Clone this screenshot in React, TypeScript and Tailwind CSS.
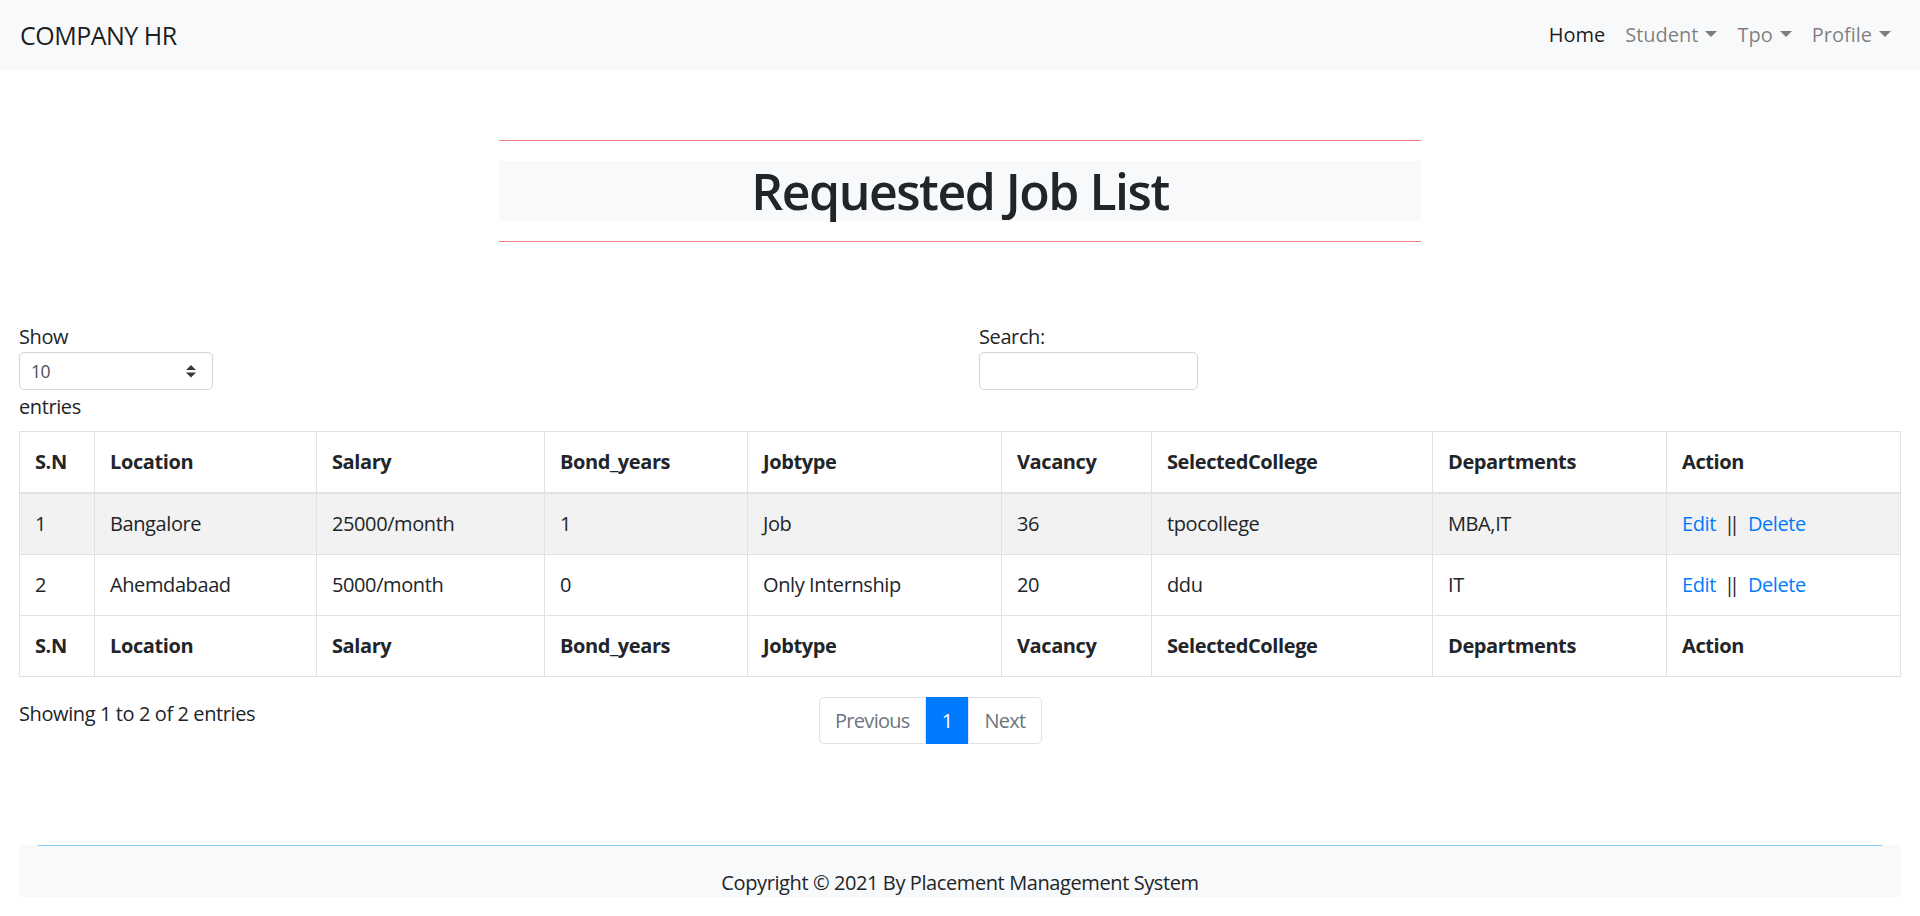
import React from "react";

const FONT = { fontFamily: '"Open Sans", "Noto Sans", Arial, sans-serif' };

const headers = [
  { label: "S.N", w: "w-[75px]" },
  { label: "Location", w: "w-[222px]" },
  { label: "Salary", w: "w-[228px]" },
  { label: "Bond_years", w: "w-[203px]" },
  { label: "Jobtype", w: "w-[254px]" },
  { label: "Vacancy", w: "w-[150px]" },
  { label: "SelectedCollege", w: "w-[281px]" },
  { label: "Departments", w: "w-[234px]" },
  { label: "Action", w: "w-[234px]" },
];

const rows = [
  ["1", "Bangalore", "25000/month", "1", "Job", "36", "tpocollege", "MBA,IT"],
  ["2", "Ahemdabaad", "5000/month", "0", "Only Internship", "20", "ddu", "IT"],
];

function Caret() {
  return (
    <span className="ml-[7px] inline-block h-0 w-0 border-x-[6px] border-t-[6px] border-x-transparent border-t-[rgba(0,0,0,0.5)] align-[5px]" />
  );
}

export default function App() {
  return (
    <div
      className="min-h-[916px] bg-white text-[20px] leading-[30px] text-[#212529] tracking-[-0.02em]"
      style={FONT}
    >
      {/* Navbar */}
      <nav className="flex h-[70px] items-center justify-between bg-[#f8f9fa] px-[20px] tracking-normal">
        <a className="text-[25px] leading-[37px] text-[rgba(0,0,0,0.9)] tracking-[-0.02em]">COMPANY HR</a>
        <ul className="flex items-center">
          <li className="px-[10px] text-[rgba(0,0,0,0.9)]">Home</li>
          <li className="px-[10px] text-[rgba(0,0,0,0.5)]">
            Student
            <Caret />
          </li>
          <li className="px-[10px] text-[rgba(0,0,0,0.5)]">
            Tpo
            <Caret />
          </li>
          <li className="pl-[10px] pr-[9px] text-[rgba(0,0,0,0.5)]">
            Profile
            <Caret />
          </li>
        </ul>
      </nav>

      <main className="px-[19px]">
        {/* Title */}
        <div className="mx-auto mt-[70px] w-[922px]">
          <div className="h-px bg-[#f08080]" />
          <div className="mt-[20px] h-[60px] bg-[#f8f9fa] text-center">
            <h1 className="text-[50px] font-semibold leading-[60px] tracking-[-0.03em] text-[#212529]">
              Requested Job List
            </h1>
          </div>
          <div className="mt-[20px] h-px bg-[#f08080]" />
        </div>

        {/* Controls */}
        <div className="-mx-[19px] mt-[80px] flex">
          <div className="w-1/2 px-[19px]">
            <div>Show</div>
            <div className="relative flex h-[38px] w-[194px] items-center rounded-[5px] border border-[#ced4da] bg-white pl-[11px] text-[17.5px] text-[#495057]">
              10
              <svg
                className="absolute right-[16px] top-[12px]"
                width="10"
                height="12.5"
                viewBox="0 0 4 5"
              >
                <path d="M2 0L0 2h4zm0 5L0 3h4z" fill="#343a40" />
              </svg>
            </div>
            <div className="mt-[2px]">entries</div>
          </div>
          <div className="w-1/2 px-[19px]">
            <div>Search:</div>
            <div className="h-[38px] w-[219px] rounded-[5px] border border-[#ced4da] bg-white" />
          </div>
        </div>

        {/* Table */}
        <table className="mt-[9px] w-full table-fixed border-collapse border border-[#dee2e6]">
          <thead>
            <tr>
              {headers.map((h) => (
                <th
                  key={h.label}
                  className={`${h.w} border border-b-2 border-[#dee2e6] px-[15px] py-[15px] text-left font-bold`}
                >
                  {h.label}
                </th>
              ))}
            </tr>
          </thead>
          <tbody>
            {rows.map((r, i) => (
              <tr key={i} className={i === 0 ? "bg-[#f2f2f2]" : "bg-white"}>
                {r.map((c, j) => (
                  <td key={j} className="border border-[#dee2e6] px-[15px] py-[15px]">
                    {c}
                  </td>
                ))}
                <td className="border border-[#dee2e6] px-[15px] py-[15px] whitespace-nowrap">
                  <a className="text-[#007bff]">Edit</a>
                  <span className="ml-[8px] mr-[14px] tracking-[-6px]">||</span>
                  <a className="text-[#007bff]">Delete</a>
                </td>
              </tr>
            ))}
          </tbody>
          <tfoot>
            <tr>
              {headers.map((h) => (
                <th
                  key={h.label}
                  className="border border-[#dee2e6] px-[15px] py-[15px] text-left font-bold"
                >
                  {h.label}
                </th>
              ))}
            </tr>
          </tfoot>
        </table>

        {/* Info + pagination */}
        <div className="-mx-[19px] mt-[20px] flex items-start">
          <div className="w-5/12 px-[19px] pt-[2px]">Showing 1 to 2 of 2 entries</div>
          <div className="w-7/12 px-[19px]">
            <ul className="flex tracking-[-0.035em]">
              <li className="rounded-l-[5px] border border-[#dee2e6] bg-white px-[15px] py-[10px] text-[#6c757d] leading-[25px]">
                Previous
              </li>
              <li className="border border-[#007bff] bg-[#007bff] px-[15px] py-[10px] text-white leading-[25px]">
                1
              </li>
              <li className="rounded-r-[5px] border border-[#dee2e6] bg-white px-[15px] py-[10px] text-[#6c757d] leading-[25px]">
                Next
              </li>
            </ul>
          </div>
        </div>

        {/* Footer */}
        <footer className="mt-[101px] h-[52px] overflow-hidden bg-[#f8f9fa]">
          <div className="mx-[19px] h-px bg-[#87cefa]" />
          <p className="mt-[22px] text-center">
            Copyright © 2021 By Placement Management System
          </p>
        </footer>
      </main>
    </div>
  );
}
